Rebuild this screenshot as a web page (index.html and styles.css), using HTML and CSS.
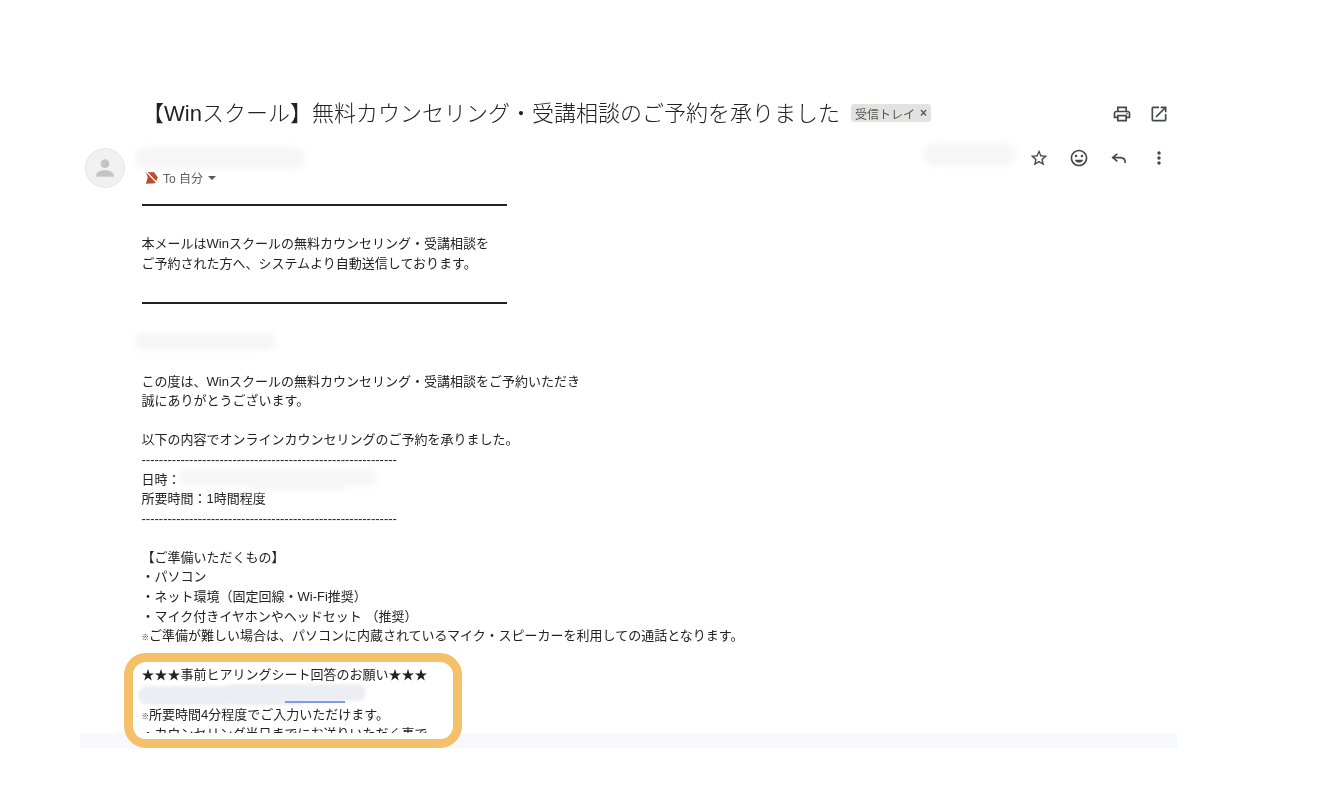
FILE: index.html
```html
<!DOCTYPE html>
<html lang="ja">
<head>
<meta charset="utf-8">
<title>Win school mail</title>
<link rel="stylesheet" href="styles.css">
</head>
<body>
<main class="mail">
  <header class="subject">
    <h1 class="subject-text">【Winスクール】無料カウンセリング・受講相談のご予約を承りました</h1>
    <span class="label">受信トレイ<span class="label-x">×</span></span>
    <div class="subject-actions">
      <svg class="icon" viewBox="0 0 24 24"><path d="M19 8h-1V3H6v5H5c-1.66 0-3 1.34-3 3v6h4v4h12v-4h4v-6c0-1.66-1.34-3-3-3zM8 5h8v3H8V5zm8 14H8v-4h8v4zm4-4h-2v-2H6v2H4v-4c0-.55.45-1 1-1h14c.55 0 1 .45 1 1v4z"/><circle cx="18" cy="11.5" r="1"/></svg>
      <svg class="icon" viewBox="0 0 24 24"><path d="M19 19H5V5h7V3H5c-1.11 0-2 .9-2 2v14c0 1.1.89 2 2 2h14c1.1 0 2-.9 2-2v-7h-2v7zM14 3v2h3.59l-9.83 9.83 1.41 1.41L19 6.41V10h2V3h-7z"/></svg>
    </div>
  </header>
  <section class="sender">
    <div class="avatar">
      <svg class="avatar-icon" viewBox="0 0 24 24"><circle cx="12" cy="8" r="4"/><path d="M12 14c-2.7 0-8 1.3-8 4v2h16v-2c0-2.7-5.3-4-8-4z"/></svg>
    </div>
    <div class="recipient">
      <svg class="tag-icon" viewBox="0 0 24 24"><path d="M3 3h13l6 9-4 9-15 1 3-10z"/><path class="tag-slash" d="M3 2l19 20"/></svg>
      <span>To 自分</span>
      <span class="caret"></span>
    </div>
    <div class="sender-actions">
      <svg class="icon" viewBox="0 0 24 24"><path d="M22 9.24l-7.19-.62L12 2 9.19 8.63 2 9.24l5.46 4.73L5.82 21 12 17.27 18.18 21l-1.63-7.03L22 9.24zM12 15.4l-3.76 2.27 1-4.28-3.32-2.88 4.38-.38L12 6.1l1.71 4.04 4.38.38-3.32 2.88 1 4.28L12 15.4z"/></svg>
      <svg class="icon" viewBox="0 0 24 24"><path d="M11.99 2C6.47 2 2 6.48 2 12s4.47 10 9.99 10C17.52 22 22 17.52 22 12S17.52 2 11.99 2zM12 20c-4.42 0-8-3.58-8-8s3.58-8 8-8 8 3.58 8 8-3.58 8-8 8z"/><circle cx="15.5" cy="9.5" r="1.5"/><circle cx="8.5" cy="9.5" r="1.5"/><path d="M12 17.5c2.33 0 4.31-1.46 5.11-3.5H6.89c.8 2.04 2.78 3.5 5.11 3.5z"/></svg>
      <svg class="icon icon-reply" viewBox="0 0 24 24"><path d="M10 7l-5.5 4.5L10 16"/><path d="M4.5 11.5H14c3.5 0 5.5 2.5 5.5 6.5"/></svg>
      <svg class="icon" viewBox="0 0 24 24"><path d="M12 8c1.1 0 2-.9 2-2s-.9-2-2-2-2 .9-2 2 .9 2 2 2zm0 2c-1.1 0-2 .9-2 2s.9 2 2 2 2-.9 2-2-.9-2-2-2zm0 6c-1.1 0-2 .9-2 2s.9 2 2 2 2-.9 2-2-.9-2-2-2z"/></svg>
    </div>
  </section>
  <article class="message">
    <div class="rule"></div>
    <br>
    本メールはWinスクールの無料カウンセリング・受講相談を<br>
    ご予約された方へ、システムより自動送信しております。<br>
    <br>
    <div class="rule"></div>
    <br>
    <br>
    <br>
    この度は、Winスクールの無料カウンセリング・受講相談をご予約いただき<br>
    誠にありがとうございます。<br>
    <br>
    以下の内容でオンラインカウンセリングのご予約を承りました。<br>
    -----------------------------------------------------------<br>
    日時：<br>
    所要時間：1時間程度<br>
    -----------------------------------------------------------<br>
    <br>
    【ご準備いただくもの】<br>
    ・パソコン<br>
    ・ネット環境（固定回線・Wi-Fi推奨）<br>
    ・マイク付きイヤホンやヘッドセット （推奨）<br>
    <span class="kome">※</span>ご準備が難しい場合は、パソコンに内蔵されているマイク・スピーカーを利用しての通話となります。<br>
    <br>
    ★★★事前ヒアリングシート回答のお願い★★★<br>
    <br>
    <span class="kome">※</span>所要時間4分程度でご入力いただけます。<br>
    ・カウンセリング当日までにお送りいただく事で
  </article>
  <div class="band"></div>
</main>
<div class="blob blob-name"></div>
<div class="blob blob-date"></div>
<div class="blob blob-greet"></div>
<div class="blob blob-when"></div>
<div class="blob blob-when2"></div>
<div class="blob blob-link"></div>
<div class="blob blob-link2"></div>
<div class="link-piece"></div>
<div class="highlight"></div>
</body>
</html>
```

FILE: styles.css
```css
* { box-sizing: border-box; }
html, body { margin: 0; background: #fff; }
body {
  height: 802px;
  overflow: hidden;
  position: relative;
  font-family: "Liberation Sans", "Noto Sans CJK JP", sans-serif;
  color: #222;
  filter: blur(0.35px);
}
.mail {
  margin-left: 80px;
  width: 1097px;
  padding-top: 93px;
}
.subject {
  display: flex;
  align-items: center;
  height: 40px;
  padding-left: 62px;
}
.subject-text {
  margin: 0 0 4px;
  font-size: 22px;
  font-weight: 300;
  white-space: nowrap;
  color: #222;
}
.label {
  margin-left: 11px;
  height: 18px;
  padding: 0 4px;
  display: inline-flex;
  align-items: center;
  gap: 5px;
  background: #e1e3e1;
  border-radius: 3px;
  font-size: 12px;
  color: #555;
}
.label-x { font-size: 12px; font-weight: 700; }
.subject-actions {
  margin-left: auto;
  display: flex;
  gap: 17px;
  padding-right: 8px;
  padding-top: 1px;
}
.icon { width: 20px; height: 20px; fill: #444746; display: block; }
.icon-reply { fill: none; stroke: #444746; stroke-width: 2; }
.sender {
  display: flex;
  height: 47.2px;
  margin-top: 15px;
  padding-left: 5px;
}
.avatar {
  width: 40px;
  height: 40px;
  border-radius: 50%;
  background: #f1f1f1;
  border: 1px solid #e6e6e6;
  display: flex;
  align-items: center;
  justify-content: center;
}
.avatar-icon { width: 26px; height: 26px; fill: #c4c4c4; }
.recipient {
  margin-left: 19px;
  margin-top: 21px;
  height: 16px;
  display: flex;
  align-items: center;
  font-size: 12px;
  color: #5e5e5e;
}
.tag-icon { width: 15px; height: 15px; fill: #c0492c; margin-right: 4px; }
.tag-slash { fill: none; stroke: #fff; stroke-width: 2; }
.caret {
  margin-left: 5px;
  margin-top: 1px;
  width: 0;
  height: 0;
  border-left: 4.5px solid transparent;
  border-right: 4.5px solid transparent;
  border-top: 4.5px solid #555;
}
.sender-actions {
  margin-left: auto;
  display: flex;
  gap: 20px;
  height: 20px;
  padding-left: 10px;
  padding-right: 8px;
}
.message {
  height: 537.8px;
  overflow: hidden;
  padding-left: 61.5px;
  font-size: 13px;
  line-height: 19.6px;
  color: #222;
}
.kome { font-size: 7.5px; font-weight: 700; line-height: 1; }
.rule {
  height: 19.6px;
  display: flex;
  align-items: center;
  padding-left: 0.5px;
}
.rule::after {
  content: "";
  width: 365px;
  height: 2px;
  background: #222;
}
.band { height: 15px; background: #f6f8fc; }
.blob {
  position: absolute;
  background: #f6f6f6;
  border-radius: 12px;
  filter: blur(3px);
}
.blob-name { left: 135px; top: 147px; width: 170px; height: 22px; }
.blob-date { left: 923px; top: 143px; width: 93px; height: 23px; }
.blob-greet { left: 134px; top: 333px; width: 142px; height: 17px; }
.blob-when { left: 178px; top: 469px; width: 199px; height: 17px; }
.blob-when2 { left: 250px; top: 482px; width: 95px; height: 9px; }
.blob-link {
  left: 138px; top: 686px; width: 170px; height: 19px;
  background: #edeef3;
  border-radius: 10px;
  filter: blur(1.5px);
}
.blob-link2 {
  left: 225px; top: 684px; width: 141px; height: 17px;
  background: #edeef3;
  border-radius: 10px;
  filter: blur(1.5px);
}
.link-piece {
  position: absolute;
  left: 285px; top: 701px; width: 60px; height: 2px;
  background: #7d9de6;
}
.highlight {
  position: absolute;
  left: 124px;
  top: 653px;
  width: 338px;
  height: 95px;
  border: 9px solid #f4c06a;
  border-radius: 22px;
  overflow: hidden;
}
.highlight::before {
  content: "";
  position: absolute;
  left: 0;
  right: 0;
  bottom: 0;
  height: 6px;
  background: #fff;
}
```
